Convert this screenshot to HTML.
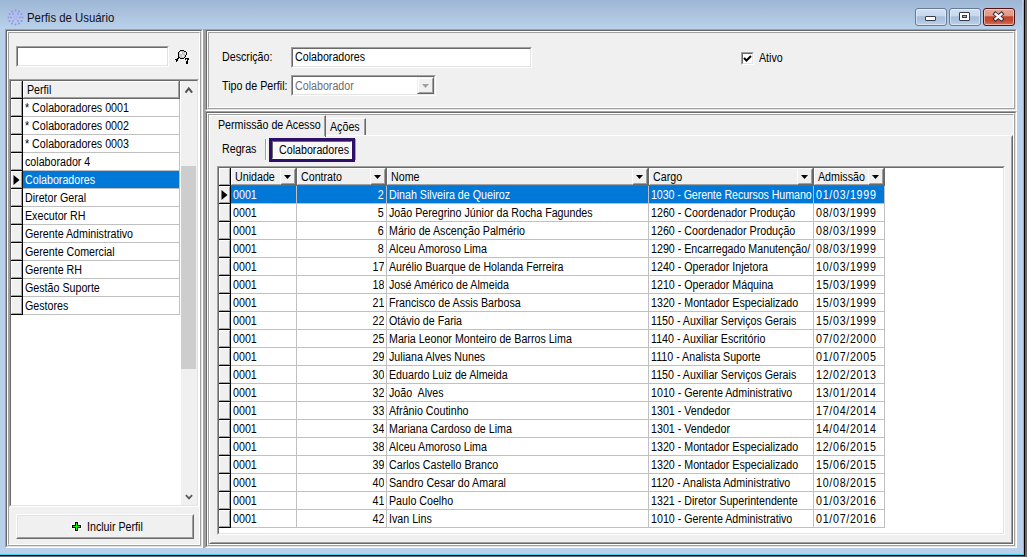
<!DOCTYPE html><html><head><meta charset="utf-8"><style>
html,body{margin:0;padding:0}
body{width:1027px;height:557px;overflow:hidden;position:relative;background:#b9d1ea;font-family:"Liberation Sans",sans-serif;font-size:12px;color:#000}
.a{position:absolute;box-sizing:border-box}
.t{position:absolute;white-space:nowrap;line-height:12px}
</style></head><body>
<div class="a" style="left:0px;top:0px;width:1027px;height:29px;background:linear-gradient(#9db6d5,#b9d1ea)"></div>
<div class="a" style="left:1023px;top:2px;width:1px;height:553px;background:#3cd6f2"></div>
<div class="a" style="left:1024px;top:0px;width:1px;height:557px;background:#000"></div>
<div class="a" style="left:1025px;top:0px;width:2px;height:557px;background:#6b6b6b"></div>
<div class="a" style="left:0px;top:552px;width:1023px;height:2px;background:#c0cde8"></div>
<div class="a" style="left:0px;top:554px;width:1024px;height:1px;background:#3cd6f2"></div>
<div class="a" style="left:0px;top:555px;width:1025px;height:1px;background:#000"></div>
<div class="a" style="left:0px;top:556px;width:1025px;height:1px;background:#6b6b6b"></div>
<div class="a" style="left:1022px;top:0px;width:1px;height:554px;background:#c0cde8"></div>
<svg class="a" style="left:7px;top:9px" width="17" height="17" viewBox="0 0 17 17"><g fill="#9d8ff5"><circle cx="8.5" cy="1.5" r="1"/><circle cx="12" cy="2.5" r="1"/><circle cx="5" cy="2.5" r="1"/><circle cx="14.5" cy="5" r="1"/><circle cx="2.5" cy="5" r="1"/><circle cx="15.5" cy="8.5" r="1"/><circle cx="1.5" cy="8.5" r="1"/><circle cx="14.5" cy="12" r="1"/><circle cx="2.5" cy="12" r="1"/><circle cx="12" cy="14.5" r="1"/><circle cx="5" cy="14.5" r="1"/><circle cx="8.5" cy="15.5" r="1"/><circle cx="6" cy="5" r="0.9"/><circle cx="11" cy="5" r="0.9"/><circle cx="4" cy="8.5" r="0.9"/><circle cx="13" cy="8.5" r="0.9"/><circle cx="6" cy="12" r="0.9"/><circle cx="11" cy="12" r="0.9"/></g><circle cx="8.5" cy="8.5" r="1.6" fill="none" stroke="#a99cf2" stroke-width="0.9" opacity="0.7"/></svg>
<div class="t" style="left:27px;top:11px;font-size:13px;line-height:14px;color:#101018;transform-origin:0 0;transform:scaleX(0.875)">Perfis de Usuário</div>
<div class="a" style="left:915px;top:8px;width:32px;height:18px;border:1px solid #687a96;border-radius:3px;background:linear-gradient(#d2e1f2 0%,#c6d8ee 44%,#a6bedb 48%,#aec5e0 75%,#bdd2ea 100%);box-shadow:inset 0 0 0 1px rgba(255,255,255,0.45)"></div>
<div class="a" style="left:949px;top:8px;width:32px;height:18px;border:1px solid #687a96;border-radius:3px;background:linear-gradient(#d2e1f2 0%,#c6d8ee 44%,#a6bedb 48%,#aec5e0 75%,#bdd2ea 100%);box-shadow:inset 0 0 0 1px rgba(255,255,255,0.45)"></div>
<div class="a" style="left:983px;top:8px;width:32px;height:18px;border:1px solid #4e1418;border-radius:3px;background:linear-gradient(#eaa795 0%,#df9784 44%,#c2442b 48%,#c54c33 75%,#d57560 100%);box-shadow:inset 0 0 0 1px rgba(255,220,210,0.6)"></div>
<div class="a" style="left:925px;top:16px;width:11px;height:5px;background:#fff;border:1px solid #3a3a4e;border-radius:1px"></div>
<div class="a" style="left:959px;top:12px;width:11px;height:9px;background:#fff;border:1px solid #3a3a4e;border-radius:1px"></div>
<div class="a" style="left:962px;top:15px;width:5px;height:3px;background:#9fb5d2;border:1px solid #3a3a4e"></div>
<svg class="a" style="left:991px;top:10px" width="15" height="13" viewBox="0 0 15 13"><path d="M4.5 4 L10.5 9 M10.5 4 L4.5 9" stroke="#2c2c3c" stroke-width="4.2" stroke-linecap="square"/><path d="M4.5 4 L10.5 9 M10.5 4 L4.5 9" stroke="#f4f4f4" stroke-width="2.3" stroke-linecap="square"/></svg>
<div class="a" style="left:5px;top:29px;width:1012px;height:519px;background:#f0f0f0"></div>
<div class="a" style="left:5px;top:29px;width:198px;height:519px;border:1px solid;border-color:#a0a0a0 #ffffff #ffffff #a0a0a0;"></div><div class="a" style="left:6px;top:30px;width:196px;height:517px;border:1px solid;border-color:#696969 #e3e3e3 #e3e3e3 #696969;"></div><div class="a" style="left:7px;top:31px;width:194px;height:515px;border:1px solid;border-color:#ffffff #a0a0a0 #a0a0a0 #ffffff;"></div><div class="a" style="left:8px;top:32px;width:192px;height:513px;border:1px solid;border-color:#a0a0a0 #ffffff #ffffff #a0a0a0;background:#f0f0f0;"></div>
<div class="a" style="left:16px;top:46px;width:153px;height:21px;border:1px solid;border-color:#a0a0a0 #ffffff #ffffff #a0a0a0;"></div><div class="a" style="left:17px;top:47px;width:151px;height:19px;border:1px solid;border-color:#696969 #e3e3e3 #e3e3e3 #696969;background:#ffffff;"></div>
<svg class="a" style="left:170px;top:45px" width="24" height="24" viewBox="0 0 24 24" shape-rendering="crispEdges"><rect x="9" y="6" width="6" height="7" fill="#c4c4c4"/><rect x="10" y="7" width="2" height="2" fill="#f0f0f0"/><rect x="12" y="10" width="2" height="2" fill="#e2e2e2"/><g fill="#000"><rect x="10" y="5" width="4" height="1"/><rect x="9" y="6" width="1" height="1"/><rect x="14" y="6" width="2" height="1"/><rect x="8" y="7" width="1" height="5"/><rect x="16" y="7" width="1" height="3"/><rect x="15" y="10" width="1" height="2"/><rect x="14" y="12" width="1" height="1"/><rect x="9" y="12" width="1" height="1"/><rect x="10" y="13" width="4" height="1"/><rect x="8" y="12" width="1" height="2"/><rect x="7" y="13" width="1" height="2"/><rect x="6" y="14" width="1" height="3"/><rect x="5" y="14" width="1" height="1"/><rect x="7" y="15" width="1" height="1"/><rect x="6" y="16" width="1" height="1"/><rect x="15" y="13" width="4" height="1"/><rect x="18" y="14" width="1" height="1"/><rect x="17" y="14" width="1" height="4"/><rect x="16" y="16" width="1" height="3"/><rect x="17" y="18" width="1" height="1"/><rect x="15" y="14" width="1" height="1"/></g></svg>
<div class="a" style="left:9px;top:79px;width:190px;height:428px;border:1px solid;border-color:#a0a0a0 #ffffff #ffffff #a0a0a0;"></div><div class="a" style="left:10px;top:80px;width:188px;height:426px;border:1px solid;border-color:#696969 #e3e3e3 #e3e3e3 #696969;background:#ffffff;"></div><div class="a" style="left:11px;top:81px;width:11px;height:17px;border:1px solid;border-color:#fff #a0a0a0 #a0a0a0 #fff;background:#f0f0f0;"></div><div class="a" style="left:22px;top:81px;width:1px;height:234px;background:#000"></div><div class="a" style="left:23px;top:81px;width:156px;height:17px;border:1px solid;border-color:#fff #a0a0a0 #a0a0a0 #fff;background:#f0f0f0;"></div><div class="a" style="left:179px;top:81px;width:1px;height:18px;background:#696969"></div><div class="t" style="left:27px;top:84px;transform-origin:0 0;transform:scaleX(0.89);color:#000;font-size:12px;">Perfil</div><div class="a" style="left:22px;top:98px;width:158px;height:1px;background:#696969"></div><div class="a" style="left:11px;top:98px;width:12px;height:1px;background:#000"></div><div class="a" style="left:11px;top:99px;width:11px;height:17px;border:1px solid;border-color:#fff #a0a0a0 #a0a0a0 #fff;background:#f0f0f0;"></div><div class="a" style="left:11px;top:116px;width:11px;height:1px;background:#000"></div><div class="a" style="left:25px;top:102px;width:154px;height:14px;overflow:hidden"><div class="t" style="left:0;top:0;transform-origin:0 0;transform:scaleX(0.89);color:#000;font-size:12px;">* Colaboradores 0001</div></div><div class="a" style="left:179px;top:99px;width:1px;height:18px;background:#c0c0c0"></div><div class="a" style="left:23px;top:116px;width:157px;height:1px;background:#c0c0c0"></div><div class="a" style="left:11px;top:117px;width:11px;height:17px;border:1px solid;border-color:#fff #a0a0a0 #a0a0a0 #fff;background:#f0f0f0;"></div><div class="a" style="left:11px;top:134px;width:11px;height:1px;background:#000"></div><div class="a" style="left:25px;top:120px;width:154px;height:14px;overflow:hidden"><div class="t" style="left:0;top:0;transform-origin:0 0;transform:scaleX(0.89);color:#000;font-size:12px;">* Colaboradores 0002</div></div><div class="a" style="left:179px;top:117px;width:1px;height:18px;background:#c0c0c0"></div><div class="a" style="left:23px;top:134px;width:157px;height:1px;background:#c0c0c0"></div><div class="a" style="left:11px;top:135px;width:11px;height:17px;border:1px solid;border-color:#fff #a0a0a0 #a0a0a0 #fff;background:#f0f0f0;"></div><div class="a" style="left:11px;top:152px;width:11px;height:1px;background:#000"></div><div class="a" style="left:25px;top:138px;width:154px;height:14px;overflow:hidden"><div class="t" style="left:0;top:0;transform-origin:0 0;transform:scaleX(0.89);color:#000;font-size:12px;">* Colaboradores 0003</div></div><div class="a" style="left:179px;top:135px;width:1px;height:18px;background:#c0c0c0"></div><div class="a" style="left:23px;top:152px;width:157px;height:1px;background:#c0c0c0"></div><div class="a" style="left:11px;top:153px;width:11px;height:17px;border:1px solid;border-color:#fff #a0a0a0 #a0a0a0 #fff;background:#f0f0f0;"></div><div class="a" style="left:11px;top:170px;width:11px;height:1px;background:#000"></div><div class="a" style="left:25px;top:156px;width:154px;height:14px;overflow:hidden"><div class="t" style="left:0;top:0;transform-origin:0 0;transform:scaleX(0.89);color:#000;font-size:12px;">colaborador 4</div></div><div class="a" style="left:179px;top:153px;width:1px;height:18px;background:#c0c0c0"></div><div class="a" style="left:23px;top:170px;width:157px;height:1px;background:#c0c0c0"></div><div class="a" style="left:11px;top:171px;width:11px;height:17px;border:1px solid;border-color:#fff #a0a0a0 #a0a0a0 #fff;background:#f0f0f0;"></div><div class="a" style="left:11px;top:188px;width:11px;height:1px;background:#000"></div><svg class="a" style="left:13px;top:175px" width="7" height="10"><path d="M0.5 0 L6.5 5 L0.5 10 Z" fill="#000"/></svg><div class="a" style="left:23px;top:171px;width:156px;height:17px;background:#0078d7"></div><div class="a" style="left:25px;top:174px;width:154px;height:14px;overflow:hidden"><div class="t" style="left:0;top:0;transform-origin:0 0;transform:scaleX(0.89);color:#fff;font-size:12px;">Colaboradores</div></div><div class="a" style="left:179px;top:171px;width:1px;height:18px;background:#c0c0c0"></div><div class="a" style="left:23px;top:188px;width:157px;height:1px;background:#c0c0c0"></div><div class="a" style="left:11px;top:189px;width:11px;height:17px;border:1px solid;border-color:#fff #a0a0a0 #a0a0a0 #fff;background:#f0f0f0;"></div><div class="a" style="left:11px;top:206px;width:11px;height:1px;background:#000"></div><div class="a" style="left:25px;top:192px;width:154px;height:14px;overflow:hidden"><div class="t" style="left:0;top:0;transform-origin:0 0;transform:scaleX(0.89);color:#000;font-size:12px;">Diretor Geral</div></div><div class="a" style="left:179px;top:189px;width:1px;height:18px;background:#c0c0c0"></div><div class="a" style="left:23px;top:206px;width:157px;height:1px;background:#c0c0c0"></div><div class="a" style="left:11px;top:207px;width:11px;height:17px;border:1px solid;border-color:#fff #a0a0a0 #a0a0a0 #fff;background:#f0f0f0;"></div><div class="a" style="left:11px;top:224px;width:11px;height:1px;background:#000"></div><div class="a" style="left:25px;top:210px;width:154px;height:14px;overflow:hidden"><div class="t" style="left:0;top:0;transform-origin:0 0;transform:scaleX(0.89);color:#000;font-size:12px;">Executor RH</div></div><div class="a" style="left:179px;top:207px;width:1px;height:18px;background:#c0c0c0"></div><div class="a" style="left:23px;top:224px;width:157px;height:1px;background:#c0c0c0"></div><div class="a" style="left:11px;top:225px;width:11px;height:17px;border:1px solid;border-color:#fff #a0a0a0 #a0a0a0 #fff;background:#f0f0f0;"></div><div class="a" style="left:11px;top:242px;width:11px;height:1px;background:#000"></div><div class="a" style="left:25px;top:228px;width:154px;height:14px;overflow:hidden"><div class="t" style="left:0;top:0;transform-origin:0 0;transform:scaleX(0.89);color:#000;font-size:12px;">Gerente Administrativo</div></div><div class="a" style="left:179px;top:225px;width:1px;height:18px;background:#c0c0c0"></div><div class="a" style="left:23px;top:242px;width:157px;height:1px;background:#c0c0c0"></div><div class="a" style="left:11px;top:243px;width:11px;height:17px;border:1px solid;border-color:#fff #a0a0a0 #a0a0a0 #fff;background:#f0f0f0;"></div><div class="a" style="left:11px;top:260px;width:11px;height:1px;background:#000"></div><div class="a" style="left:25px;top:246px;width:154px;height:14px;overflow:hidden"><div class="t" style="left:0;top:0;transform-origin:0 0;transform:scaleX(0.89);color:#000;font-size:12px;">Gerente Comercial</div></div><div class="a" style="left:179px;top:243px;width:1px;height:18px;background:#c0c0c0"></div><div class="a" style="left:23px;top:260px;width:157px;height:1px;background:#c0c0c0"></div><div class="a" style="left:11px;top:261px;width:11px;height:17px;border:1px solid;border-color:#fff #a0a0a0 #a0a0a0 #fff;background:#f0f0f0;"></div><div class="a" style="left:11px;top:278px;width:11px;height:1px;background:#000"></div><div class="a" style="left:25px;top:264px;width:154px;height:14px;overflow:hidden"><div class="t" style="left:0;top:0;transform-origin:0 0;transform:scaleX(0.89);color:#000;font-size:12px;">Gerente RH</div></div><div class="a" style="left:179px;top:261px;width:1px;height:18px;background:#c0c0c0"></div><div class="a" style="left:23px;top:278px;width:157px;height:1px;background:#c0c0c0"></div><div class="a" style="left:11px;top:279px;width:11px;height:17px;border:1px solid;border-color:#fff #a0a0a0 #a0a0a0 #fff;background:#f0f0f0;"></div><div class="a" style="left:11px;top:296px;width:11px;height:1px;background:#000"></div><div class="a" style="left:25px;top:282px;width:154px;height:14px;overflow:hidden"><div class="t" style="left:0;top:0;transform-origin:0 0;transform:scaleX(0.89);color:#000;font-size:12px;">Gestão Suporte</div></div><div class="a" style="left:179px;top:279px;width:1px;height:18px;background:#c0c0c0"></div><div class="a" style="left:23px;top:296px;width:157px;height:1px;background:#c0c0c0"></div><div class="a" style="left:11px;top:297px;width:11px;height:17px;border:1px solid;border-color:#fff #a0a0a0 #a0a0a0 #fff;background:#f0f0f0;"></div><div class="a" style="left:11px;top:314px;width:11px;height:1px;background:#000"></div><div class="a" style="left:25px;top:300px;width:154px;height:14px;overflow:hidden"><div class="t" style="left:0;top:0;transform-origin:0 0;transform:scaleX(0.89);color:#000;font-size:12px;">Gestores</div></div><div class="a" style="left:179px;top:297px;width:1px;height:18px;background:#c0c0c0"></div><div class="a" style="left:23px;top:314px;width:157px;height:1px;background:#c0c0c0"></div>
<div class="a" style="left:181px;top:81px;width:16px;height:424px;background:#f0f0f0"></div>
<div class="a" style="left:181px;top:166px;width:15px;height:203px;background:#cdcdcd"></div>
<svg class="a" style="left:184px;top:86px" width="10" height="8"><path d="M1.5 6.6 L4.8 2.4 L8.1 6.6" stroke="#555" stroke-width="2.1" fill="none"/></svg>
<svg class="a" style="left:185px;top:494px" width="8" height="6"><path d="M0.9 1.1 L4 4.4 L7.1 1.1" stroke="#5a5a5a" stroke-width="1.8" fill="none"/></svg>
<div class="a" style="left:16px;top:514px;width:178px;height:25px;border:1px solid;border-color:#fff #696969 #696969 #fff;background:#f0f0f0;"></div>
<div class="a" style="left:17px;top:515px;width:176px;height:23px;border:1px solid;border-color:#e3e3e3 #a0a0a0 #a0a0a0 #e3e3e3;"></div>
<div class="a" style="left:74px;top:521px;width:5px;height:11px;background:#fff"></div>
<div class="a" style="left:71px;top:524px;width:11px;height:5px;background:#fff"></div>
<div class="a" style="left:75px;top:522px;width:3px;height:9px;background:#000"></div>
<div class="a" style="left:72px;top:525px;width:9px;height:3px;background:#000"></div>
<div class="a" style="left:76px;top:523px;width:1px;height:7px;background:#00ff00"></div>
<div class="a" style="left:73px;top:526px;width:7px;height:1px;background:#00ff00"></div>
<div class="t" style="left:87px;top:521px;transform-origin:0 0;transform:scaleX(0.89);color:#000;font-size:12px;">Incluir Perfil</div>
<div class="a" style="left:203px;top:29px;width:2px;height:519px;background:#a0a0a0"></div>
<div class="a" style="left:205px;top:29px;width:812px;height:82px;border:1px solid;border-color:#a0a0a0 #ffffff #ffffff #a0a0a0;"></div><div class="a" style="left:206px;top:30px;width:810px;height:80px;border:1px solid;border-color:#696969 #e3e3e3 #e3e3e3 #696969;"></div><div class="a" style="left:207px;top:31px;width:808px;height:78px;border:1px solid;border-color:#ffffff #a0a0a0 #a0a0a0 #ffffff;"></div><div class="a" style="left:208px;top:32px;width:806px;height:76px;border:1px solid;border-color:#a0a0a0 #ffffff #ffffff #a0a0a0;background:#f0f0f0;"></div>
<div class="t" style="left:222px;top:51px;transform-origin:0 0;transform:scaleX(0.89);color:#000;font-size:12px;">Descrição:</div>
<div class="a" style="left:291px;top:47px;width:241px;height:21px;border:1px solid;border-color:#a0a0a0 #ffffff #ffffff #a0a0a0;"></div><div class="a" style="left:292px;top:48px;width:239px;height:19px;border:1px solid;border-color:#696969 #e3e3e3 #e3e3e3 #696969;background:#ffffff;"></div>
<div class="t" style="left:295px;top:51px;transform-origin:0 0;transform:scaleX(0.89);color:#000;font-size:12px;">Colaboradores</div>
<div class="t" style="left:222px;top:80px;transform-origin:0 0;transform:scaleX(0.89);color:#000;font-size:12px;">Tipo de Perfil:</div>
<div class="a" style="left:291px;top:75px;width:145px;height:21px;border:1px solid;border-color:#a0a0a0 #ffffff #ffffff #a0a0a0;"></div><div class="a" style="left:292px;top:76px;width:143px;height:19px;border:1px solid;border-color:#696969 #e3e3e3 #e3e3e3 #696969;background:#f0f0f0;"></div>
<div class="a" style="left:293px;top:77px;width:124px;height:17px;background:#ffffff"></div>
<div class="t" style="left:295px;top:80px;transform-origin:0 0;transform:scaleX(0.89);color:#6d6d6d;font-size:12px;">Colaborador</div>
<div class="a" style="left:417px;top:77px;width:17px;height:17px;border:1px solid;border-color:#f0f0f0 #696969 #696969 #f0f0f0;background:#f0f0f0;"></div>
<div class="a" style="left:418px;top:78px;width:15px;height:15px;border:1px solid;border-color:#fff #a0a0a0 #a0a0a0 #fff;"></div>
<svg class="a" style="left:422px;top:84px" width="7" height="4"><path d="M0 0 H7 L3.5 4 Z" fill="#a0a0a0"/></svg>
<div class="a" style="left:741px;top:52px;width:13px;height:13px;border:1px solid;border-color:#a0a0a0 #ffffff #ffffff #a0a0a0;"></div><div class="a" style="left:742px;top:53px;width:11px;height:11px;border:1px solid;border-color:#696969 #e3e3e3 #e3e3e3 #696969;background:#ffffff;"></div>
<svg class="a" style="left:743px;top:54px" width="9" height="9"><path d="M1 4 L3.5 6.5 L8 2" stroke="#000" stroke-width="2" fill="none"/></svg>
<div class="t" style="left:759px;top:52px;transform-origin:0 0;transform:scaleX(0.89);color:#000;font-size:12px;">Ativo</div>
<div class="a" style="left:205px;top:111px;width:812px;height:437px;border:1px solid;border-color:#a0a0a0 #ffffff #ffffff #a0a0a0;"></div><div class="a" style="left:206px;top:112px;width:810px;height:435px;border:1px solid;border-color:#696969 #e3e3e3 #e3e3e3 #696969;"></div><div class="a" style="left:207px;top:113px;width:808px;height:433px;border:1px solid;border-color:#ffffff #a0a0a0 #a0a0a0 #ffffff;"></div><div class="a" style="left:208px;top:114px;width:806px;height:431px;border:1px solid;border-color:#a0a0a0 #ffffff #ffffff #a0a0a0;background:#f0f0f0;"></div>
<div class="a" style="left:209px;top:135px;width:804px;height:409px;border:1px solid;border-color:#fff #696969 #696969 #fff;"></div>
<div class="a" style="left:210px;top:136px;width:802px;height:407px;border:1px solid;border-color:#f0f0f0 #a0a0a0 #a0a0a0 #f0f0f0;"></div>
<div class="a" style="left:209px;top:115px;width:117px;height:22px;background:#f0f0f0;border-style:solid;border-width:1px 1px 0 1px;border-color:#fff #696969 #f0f0f0 #fff"></div>
<div class="a" style="left:324px;top:116px;width:1px;height:20px;background:#a0a0a0"></div>
<div class="t" style="left:218px;top:119px;transform-origin:0 0;transform:scaleX(0.89);color:#000;font-size:12px;">Permissão de Acesso</div>
<div class="a" style="left:326px;top:118px;width:40px;height:17px;background:#f0f0f0;border-style:solid;border-width:1px 1px 0 0;border-color:#fff #696969 #f0f0f0 #fff"></div>
<div class="a" style="left:364px;top:119px;width:1px;height:16px;background:#a0a0a0"></div>
<div class="t" style="left:330px;top:121px;transform-origin:0 0;transform:scaleX(0.89);color:#000;font-size:12px;">Ações</div>
<div class="t" style="left:222px;top:143px;transform-origin:0 0;transform:scaleX(0.89);color:#000;font-size:12px;">Regras</div>
<div class="a" style="left:265px;top:139px;width:1px;height:21px;background:#a0a0a0"></div>
<div class="a" style="left:266px;top:139px;width:1px;height:21px;background:#ffffff"></div>
<div class="a" style="left:269px;top:138px;width:86px;height:24px;border:3px solid #2d0f68;background:#f7f7f7"></div>
<div class="a" style="left:272px;top:141px;width:80px;height:18px;border:1px solid;border-color:#696969 #fff #fff #696969;"></div>
<div class="t" style="left:279px;top:144px;transform-origin:0 0;transform:scaleX(0.89);color:#000;font-size:12px;">Colaboradores</div>
<div class="a" style="left:355px;top:139px;width:1px;height:21px;background:#a0a0a0"></div>
<div class="a" style="left:217px;top:166px;width:788px;height:369px;border:1px solid;border-color:#a0a0a0 #ffffff #ffffff #a0a0a0;"></div><div class="a" style="left:218px;top:167px;width:786px;height:367px;border:1px solid;border-color:#696969 #e3e3e3 #e3e3e3 #696969;background:#ffffff;"></div><div class="a" style="left:219px;top:168px;width:11px;height:17px;border:1px solid;border-color:#fff #a0a0a0 #a0a0a0 #fff;background:#f0f0f0;"></div><div class="a" style="left:230px;top:168px;width:1px;height:360px;background:#000"></div><div class="a" style="left:231px;top:168px;width:65px;height:17px;border:1px solid;border-color:#fff #a0a0a0 #a0a0a0 #fff;background:#f0f0f0;"></div><div class="a" style="left:296px;top:168px;width:1px;height:18px;background:#696969"></div><div class="t" style="left:235px;top:171px;transform-origin:0 0;transform:scaleX(0.89);color:#000;font-size:12px;">Unidade</div><div class="a" style="left:280px;top:168px;width:16px;height:17px;border:1px solid;border-color:#fff #696969 #696969 #fff;background:#f0f0f0;"></div><div class="a" style="left:281px;top:169px;width:14px;height:15px;border:1px solid;border-color:#f0f0f0 #a0a0a0 #a0a0a0 #f0f0f0;"></div><svg class="a" style="left:284px;top:175px" width="7" height="4"><path d="M0 0 H7 L3.5 4 Z" fill="#000"/></svg><div class="a" style="left:297px;top:168px;width:89px;height:17px;border:1px solid;border-color:#fff #a0a0a0 #a0a0a0 #fff;background:#f0f0f0;"></div><div class="a" style="left:386px;top:168px;width:1px;height:18px;background:#696969"></div><div class="t" style="left:301px;top:171px;transform-origin:0 0;transform:scaleX(0.89);color:#000;font-size:12px;">Contrato</div><div class="a" style="left:370px;top:168px;width:16px;height:17px;border:1px solid;border-color:#fff #696969 #696969 #fff;background:#f0f0f0;"></div><div class="a" style="left:371px;top:169px;width:14px;height:15px;border:1px solid;border-color:#f0f0f0 #a0a0a0 #a0a0a0 #f0f0f0;"></div><svg class="a" style="left:374px;top:175px" width="7" height="4"><path d="M0 0 H7 L3.5 4 Z" fill="#000"/></svg><div class="a" style="left:387px;top:168px;width:261px;height:17px;border:1px solid;border-color:#fff #a0a0a0 #a0a0a0 #fff;background:#f0f0f0;"></div><div class="a" style="left:648px;top:168px;width:1px;height:18px;background:#696969"></div><div class="t" style="left:391px;top:171px;transform-origin:0 0;transform:scaleX(0.89);color:#000;font-size:12px;">Nome</div><div class="a" style="left:632px;top:168px;width:16px;height:17px;border:1px solid;border-color:#fff #696969 #696969 #fff;background:#f0f0f0;"></div><div class="a" style="left:633px;top:169px;width:14px;height:15px;border:1px solid;border-color:#f0f0f0 #a0a0a0 #a0a0a0 #f0f0f0;"></div><svg class="a" style="left:636px;top:175px" width="7" height="4"><path d="M0 0 H7 L3.5 4 Z" fill="#000"/></svg><div class="a" style="left:649px;top:168px;width:164px;height:17px;border:1px solid;border-color:#fff #a0a0a0 #a0a0a0 #fff;background:#f0f0f0;"></div><div class="a" style="left:813px;top:168px;width:1px;height:18px;background:#696969"></div><div class="t" style="left:653px;top:171px;transform-origin:0 0;transform:scaleX(0.89);color:#000;font-size:12px;">Cargo</div><div class="a" style="left:797px;top:168px;width:16px;height:17px;border:1px solid;border-color:#fff #696969 #696969 #fff;background:#f0f0f0;"></div><div class="a" style="left:798px;top:169px;width:14px;height:15px;border:1px solid;border-color:#f0f0f0 #a0a0a0 #a0a0a0 #f0f0f0;"></div><svg class="a" style="left:801px;top:175px" width="7" height="4"><path d="M0 0 H7 L3.5 4 Z" fill="#000"/></svg><div class="a" style="left:814px;top:168px;width:70px;height:17px;border:1px solid;border-color:#fff #a0a0a0 #a0a0a0 #fff;background:#f0f0f0;"></div><div class="a" style="left:884px;top:168px;width:1px;height:18px;background:#696969"></div><div class="t" style="left:818px;top:171px;transform-origin:0 0;transform:scaleX(0.89);color:#000;font-size:12px;">Admissão</div><div class="a" style="left:868px;top:168px;width:16px;height:17px;border:1px solid;border-color:#fff #696969 #696969 #fff;background:#f0f0f0;"></div><div class="a" style="left:869px;top:169px;width:14px;height:15px;border:1px solid;border-color:#f0f0f0 #a0a0a0 #a0a0a0 #f0f0f0;"></div><svg class="a" style="left:872px;top:175px" width="7" height="4"><path d="M0 0 H7 L3.5 4 Z" fill="#000"/></svg><div class="a" style="left:230px;top:185px;width:655px;height:1px;background:#696969"></div><div class="a" style="left:219px;top:185px;width:12px;height:1px;background:#000"></div><div class="a" style="left:219px;top:186px;width:11px;height:17px;border:1px solid;border-color:#fff #a0a0a0 #a0a0a0 #fff;background:#f0f0f0;"></div><div class="a" style="left:219px;top:203px;width:11px;height:1px;background:#000"></div><svg class="a" style="left:221px;top:190px" width="7" height="10"><path d="M0.5 0 L6.5 5 L0.5 10 Z" fill="#000"/></svg><div class="a" style="left:231px;top:186px;width:65px;height:17px;background:#0078d7"></div><div class="a" style="left:233px;top:189px;width:63px;height:14px;overflow:hidden"><div class="t" style="left:0;top:0;transform-origin:0 0;transform:scaleX(0.89);color:#fff;font-size:12px;">0001</div></div><div class="a" style="left:296px;top:186px;width:1px;height:18px;background:#c0c0c0"></div><div class="a" style="left:231px;top:203px;width:66px;height:1px;background:#c0c0c0"></div><div class="a" style="left:297px;top:186px;width:89px;height:17px;background:#0078d7"></div><div class="a" style="left:297px;top:189px;width:87px;height:14px;overflow:hidden"><div class="t" style="right:0;top:0;transform-origin:100% 0;transform:scaleX(0.89);color:#fff;font-size:12px;">2</div></div><div class="a" style="left:386px;top:186px;width:1px;height:18px;background:#c0c0c0"></div><div class="a" style="left:297px;top:203px;width:90px;height:1px;background:#c0c0c0"></div><div class="a" style="left:387px;top:186px;width:261px;height:17px;background:#0078d7"></div><div class="a" style="left:389px;top:189px;width:259px;height:14px;overflow:hidden"><div class="t" style="left:0;top:0;transform-origin:0 0;transform:scaleX(0.89);color:#fff;font-size:12px;">Dinah Silveira de Queiroz</div></div><div class="a" style="left:648px;top:186px;width:1px;height:18px;background:#c0c0c0"></div><div class="a" style="left:387px;top:203px;width:262px;height:1px;background:#c0c0c0"></div><div class="a" style="left:649px;top:186px;width:164px;height:17px;background:#0078d7"></div><div class="a" style="left:651px;top:189px;width:162px;height:14px;overflow:hidden"><div class="t" style="left:0;top:0;transform-origin:0 0;transform:scaleX(0.89);color:#fff;font-size:12px;letter-spacing:-0.1px;">1030 - Gerente Recursos Humano</div></div><div class="a" style="left:813px;top:186px;width:1px;height:18px;background:#c0c0c0"></div><div class="a" style="left:649px;top:203px;width:165px;height:1px;background:#c0c0c0"></div><div class="a" style="left:814px;top:186px;width:70px;height:17px;background:#0078d7"></div><div class="a" style="left:816px;top:189px;width:68px;height:14px;overflow:hidden"><div class="t" style="left:0;top:0;transform-origin:0 0;transform:scaleX(0.89);color:#fff;font-size:12px;letter-spacing:0.8px;">01/03/1999</div></div><div class="a" style="left:884px;top:186px;width:1px;height:18px;background:#c0c0c0"></div><div class="a" style="left:814px;top:203px;width:71px;height:1px;background:#c0c0c0"></div><div class="a" style="left:219px;top:204px;width:11px;height:17px;border:1px solid;border-color:#fff #a0a0a0 #a0a0a0 #fff;background:#f0f0f0;"></div><div class="a" style="left:219px;top:221px;width:11px;height:1px;background:#000"></div><div class="a" style="left:233px;top:207px;width:63px;height:14px;overflow:hidden"><div class="t" style="left:0;top:0;transform-origin:0 0;transform:scaleX(0.89);color:#000;font-size:12px;">0001</div></div><div class="a" style="left:296px;top:204px;width:1px;height:18px;background:#c0c0c0"></div><div class="a" style="left:231px;top:221px;width:66px;height:1px;background:#c0c0c0"></div><div class="a" style="left:297px;top:207px;width:87px;height:14px;overflow:hidden"><div class="t" style="right:0;top:0;transform-origin:100% 0;transform:scaleX(0.89);color:#000;font-size:12px;">5</div></div><div class="a" style="left:386px;top:204px;width:1px;height:18px;background:#c0c0c0"></div><div class="a" style="left:297px;top:221px;width:90px;height:1px;background:#c0c0c0"></div><div class="a" style="left:389px;top:207px;width:259px;height:14px;overflow:hidden"><div class="t" style="left:0;top:0;transform-origin:0 0;transform:scaleX(0.89);color:#000;font-size:12px;">João Peregrino Júnior da Rocha Fagundes</div></div><div class="a" style="left:648px;top:204px;width:1px;height:18px;background:#c0c0c0"></div><div class="a" style="left:387px;top:221px;width:262px;height:1px;background:#c0c0c0"></div><div class="a" style="left:651px;top:207px;width:162px;height:14px;overflow:hidden"><div class="t" style="left:0;top:0;transform-origin:0 0;transform:scaleX(0.89);color:#000;font-size:12px;">1260 - Coordenador Produção</div></div><div class="a" style="left:813px;top:204px;width:1px;height:18px;background:#c0c0c0"></div><div class="a" style="left:649px;top:221px;width:165px;height:1px;background:#c0c0c0"></div><div class="a" style="left:816px;top:207px;width:68px;height:14px;overflow:hidden"><div class="t" style="left:0;top:0;transform-origin:0 0;transform:scaleX(0.89);color:#000;font-size:12px;letter-spacing:0.8px;">08/03/1999</div></div><div class="a" style="left:884px;top:204px;width:1px;height:18px;background:#c0c0c0"></div><div class="a" style="left:814px;top:221px;width:71px;height:1px;background:#c0c0c0"></div><div class="a" style="left:219px;top:222px;width:11px;height:17px;border:1px solid;border-color:#fff #a0a0a0 #a0a0a0 #fff;background:#f0f0f0;"></div><div class="a" style="left:219px;top:239px;width:11px;height:1px;background:#000"></div><div class="a" style="left:233px;top:225px;width:63px;height:14px;overflow:hidden"><div class="t" style="left:0;top:0;transform-origin:0 0;transform:scaleX(0.89);color:#000;font-size:12px;">0001</div></div><div class="a" style="left:296px;top:222px;width:1px;height:18px;background:#c0c0c0"></div><div class="a" style="left:231px;top:239px;width:66px;height:1px;background:#c0c0c0"></div><div class="a" style="left:297px;top:225px;width:87px;height:14px;overflow:hidden"><div class="t" style="right:0;top:0;transform-origin:100% 0;transform:scaleX(0.89);color:#000;font-size:12px;">6</div></div><div class="a" style="left:386px;top:222px;width:1px;height:18px;background:#c0c0c0"></div><div class="a" style="left:297px;top:239px;width:90px;height:1px;background:#c0c0c0"></div><div class="a" style="left:389px;top:225px;width:259px;height:14px;overflow:hidden"><div class="t" style="left:0;top:0;transform-origin:0 0;transform:scaleX(0.89);color:#000;font-size:12px;">Mário de Ascenção Palmério</div></div><div class="a" style="left:648px;top:222px;width:1px;height:18px;background:#c0c0c0"></div><div class="a" style="left:387px;top:239px;width:262px;height:1px;background:#c0c0c0"></div><div class="a" style="left:651px;top:225px;width:162px;height:14px;overflow:hidden"><div class="t" style="left:0;top:0;transform-origin:0 0;transform:scaleX(0.89);color:#000;font-size:12px;">1260 - Coordenador Produção</div></div><div class="a" style="left:813px;top:222px;width:1px;height:18px;background:#c0c0c0"></div><div class="a" style="left:649px;top:239px;width:165px;height:1px;background:#c0c0c0"></div><div class="a" style="left:816px;top:225px;width:68px;height:14px;overflow:hidden"><div class="t" style="left:0;top:0;transform-origin:0 0;transform:scaleX(0.89);color:#000;font-size:12px;letter-spacing:0.8px;">08/03/1999</div></div><div class="a" style="left:884px;top:222px;width:1px;height:18px;background:#c0c0c0"></div><div class="a" style="left:814px;top:239px;width:71px;height:1px;background:#c0c0c0"></div><div class="a" style="left:219px;top:240px;width:11px;height:17px;border:1px solid;border-color:#fff #a0a0a0 #a0a0a0 #fff;background:#f0f0f0;"></div><div class="a" style="left:219px;top:257px;width:11px;height:1px;background:#000"></div><div class="a" style="left:233px;top:243px;width:63px;height:14px;overflow:hidden"><div class="t" style="left:0;top:0;transform-origin:0 0;transform:scaleX(0.89);color:#000;font-size:12px;">0001</div></div><div class="a" style="left:296px;top:240px;width:1px;height:18px;background:#c0c0c0"></div><div class="a" style="left:231px;top:257px;width:66px;height:1px;background:#c0c0c0"></div><div class="a" style="left:297px;top:243px;width:87px;height:14px;overflow:hidden"><div class="t" style="right:0;top:0;transform-origin:100% 0;transform:scaleX(0.89);color:#000;font-size:12px;">8</div></div><div class="a" style="left:386px;top:240px;width:1px;height:18px;background:#c0c0c0"></div><div class="a" style="left:297px;top:257px;width:90px;height:1px;background:#c0c0c0"></div><div class="a" style="left:389px;top:243px;width:259px;height:14px;overflow:hidden"><div class="t" style="left:0;top:0;transform-origin:0 0;transform:scaleX(0.89);color:#000;font-size:12px;">Alceu Amoroso Lima</div></div><div class="a" style="left:648px;top:240px;width:1px;height:18px;background:#c0c0c0"></div><div class="a" style="left:387px;top:257px;width:262px;height:1px;background:#c0c0c0"></div><div class="a" style="left:651px;top:243px;width:162px;height:14px;overflow:hidden"><div class="t" style="left:0;top:0;transform-origin:0 0;transform:scaleX(0.89);color:#000;font-size:12px;">1290 - Encarregado Manutenção/</div></div><div class="a" style="left:813px;top:240px;width:1px;height:18px;background:#c0c0c0"></div><div class="a" style="left:649px;top:257px;width:165px;height:1px;background:#c0c0c0"></div><div class="a" style="left:816px;top:243px;width:68px;height:14px;overflow:hidden"><div class="t" style="left:0;top:0;transform-origin:0 0;transform:scaleX(0.89);color:#000;font-size:12px;letter-spacing:0.8px;">08/03/1999</div></div><div class="a" style="left:884px;top:240px;width:1px;height:18px;background:#c0c0c0"></div><div class="a" style="left:814px;top:257px;width:71px;height:1px;background:#c0c0c0"></div><div class="a" style="left:219px;top:258px;width:11px;height:17px;border:1px solid;border-color:#fff #a0a0a0 #a0a0a0 #fff;background:#f0f0f0;"></div><div class="a" style="left:219px;top:275px;width:11px;height:1px;background:#000"></div><div class="a" style="left:233px;top:261px;width:63px;height:14px;overflow:hidden"><div class="t" style="left:0;top:0;transform-origin:0 0;transform:scaleX(0.89);color:#000;font-size:12px;">0001</div></div><div class="a" style="left:296px;top:258px;width:1px;height:18px;background:#c0c0c0"></div><div class="a" style="left:231px;top:275px;width:66px;height:1px;background:#c0c0c0"></div><div class="a" style="left:297px;top:261px;width:87px;height:14px;overflow:hidden"><div class="t" style="right:0;top:0;transform-origin:100% 0;transform:scaleX(0.89);color:#000;font-size:12px;">17</div></div><div class="a" style="left:386px;top:258px;width:1px;height:18px;background:#c0c0c0"></div><div class="a" style="left:297px;top:275px;width:90px;height:1px;background:#c0c0c0"></div><div class="a" style="left:389px;top:261px;width:259px;height:14px;overflow:hidden"><div class="t" style="left:0;top:0;transform-origin:0 0;transform:scaleX(0.89);color:#000;font-size:12px;">Aurélio Buarque de Holanda Ferreira</div></div><div class="a" style="left:648px;top:258px;width:1px;height:18px;background:#c0c0c0"></div><div class="a" style="left:387px;top:275px;width:262px;height:1px;background:#c0c0c0"></div><div class="a" style="left:651px;top:261px;width:162px;height:14px;overflow:hidden"><div class="t" style="left:0;top:0;transform-origin:0 0;transform:scaleX(0.89);color:#000;font-size:12px;">1240 - Operador Injetora</div></div><div class="a" style="left:813px;top:258px;width:1px;height:18px;background:#c0c0c0"></div><div class="a" style="left:649px;top:275px;width:165px;height:1px;background:#c0c0c0"></div><div class="a" style="left:816px;top:261px;width:68px;height:14px;overflow:hidden"><div class="t" style="left:0;top:0;transform-origin:0 0;transform:scaleX(0.89);color:#000;font-size:12px;letter-spacing:0.8px;">10/03/1999</div></div><div class="a" style="left:884px;top:258px;width:1px;height:18px;background:#c0c0c0"></div><div class="a" style="left:814px;top:275px;width:71px;height:1px;background:#c0c0c0"></div><div class="a" style="left:219px;top:276px;width:11px;height:17px;border:1px solid;border-color:#fff #a0a0a0 #a0a0a0 #fff;background:#f0f0f0;"></div><div class="a" style="left:219px;top:293px;width:11px;height:1px;background:#000"></div><div class="a" style="left:233px;top:279px;width:63px;height:14px;overflow:hidden"><div class="t" style="left:0;top:0;transform-origin:0 0;transform:scaleX(0.89);color:#000;font-size:12px;">0001</div></div><div class="a" style="left:296px;top:276px;width:1px;height:18px;background:#c0c0c0"></div><div class="a" style="left:231px;top:293px;width:66px;height:1px;background:#c0c0c0"></div><div class="a" style="left:297px;top:279px;width:87px;height:14px;overflow:hidden"><div class="t" style="right:0;top:0;transform-origin:100% 0;transform:scaleX(0.89);color:#000;font-size:12px;">18</div></div><div class="a" style="left:386px;top:276px;width:1px;height:18px;background:#c0c0c0"></div><div class="a" style="left:297px;top:293px;width:90px;height:1px;background:#c0c0c0"></div><div class="a" style="left:389px;top:279px;width:259px;height:14px;overflow:hidden"><div class="t" style="left:0;top:0;transform-origin:0 0;transform:scaleX(0.89);color:#000;font-size:12px;">José Américo de Almeida</div></div><div class="a" style="left:648px;top:276px;width:1px;height:18px;background:#c0c0c0"></div><div class="a" style="left:387px;top:293px;width:262px;height:1px;background:#c0c0c0"></div><div class="a" style="left:651px;top:279px;width:162px;height:14px;overflow:hidden"><div class="t" style="left:0;top:0;transform-origin:0 0;transform:scaleX(0.89);color:#000;font-size:12px;">1210 - Operador Máquina</div></div><div class="a" style="left:813px;top:276px;width:1px;height:18px;background:#c0c0c0"></div><div class="a" style="left:649px;top:293px;width:165px;height:1px;background:#c0c0c0"></div><div class="a" style="left:816px;top:279px;width:68px;height:14px;overflow:hidden"><div class="t" style="left:0;top:0;transform-origin:0 0;transform:scaleX(0.89);color:#000;font-size:12px;letter-spacing:0.8px;">15/03/1999</div></div><div class="a" style="left:884px;top:276px;width:1px;height:18px;background:#c0c0c0"></div><div class="a" style="left:814px;top:293px;width:71px;height:1px;background:#c0c0c0"></div><div class="a" style="left:219px;top:294px;width:11px;height:17px;border:1px solid;border-color:#fff #a0a0a0 #a0a0a0 #fff;background:#f0f0f0;"></div><div class="a" style="left:219px;top:311px;width:11px;height:1px;background:#000"></div><div class="a" style="left:233px;top:297px;width:63px;height:14px;overflow:hidden"><div class="t" style="left:0;top:0;transform-origin:0 0;transform:scaleX(0.89);color:#000;font-size:12px;">0001</div></div><div class="a" style="left:296px;top:294px;width:1px;height:18px;background:#c0c0c0"></div><div class="a" style="left:231px;top:311px;width:66px;height:1px;background:#c0c0c0"></div><div class="a" style="left:297px;top:297px;width:87px;height:14px;overflow:hidden"><div class="t" style="right:0;top:0;transform-origin:100% 0;transform:scaleX(0.89);color:#000;font-size:12px;">21</div></div><div class="a" style="left:386px;top:294px;width:1px;height:18px;background:#c0c0c0"></div><div class="a" style="left:297px;top:311px;width:90px;height:1px;background:#c0c0c0"></div><div class="a" style="left:389px;top:297px;width:259px;height:14px;overflow:hidden"><div class="t" style="left:0;top:0;transform-origin:0 0;transform:scaleX(0.89);color:#000;font-size:12px;">Francisco de Assis Barbosa</div></div><div class="a" style="left:648px;top:294px;width:1px;height:18px;background:#c0c0c0"></div><div class="a" style="left:387px;top:311px;width:262px;height:1px;background:#c0c0c0"></div><div class="a" style="left:651px;top:297px;width:162px;height:14px;overflow:hidden"><div class="t" style="left:0;top:0;transform-origin:0 0;transform:scaleX(0.89);color:#000;font-size:12px;">1320 - Montador Especializado</div></div><div class="a" style="left:813px;top:294px;width:1px;height:18px;background:#c0c0c0"></div><div class="a" style="left:649px;top:311px;width:165px;height:1px;background:#c0c0c0"></div><div class="a" style="left:816px;top:297px;width:68px;height:14px;overflow:hidden"><div class="t" style="left:0;top:0;transform-origin:0 0;transform:scaleX(0.89);color:#000;font-size:12px;letter-spacing:0.8px;">15/03/1999</div></div><div class="a" style="left:884px;top:294px;width:1px;height:18px;background:#c0c0c0"></div><div class="a" style="left:814px;top:311px;width:71px;height:1px;background:#c0c0c0"></div><div class="a" style="left:219px;top:312px;width:11px;height:17px;border:1px solid;border-color:#fff #a0a0a0 #a0a0a0 #fff;background:#f0f0f0;"></div><div class="a" style="left:219px;top:329px;width:11px;height:1px;background:#000"></div><div class="a" style="left:233px;top:315px;width:63px;height:14px;overflow:hidden"><div class="t" style="left:0;top:0;transform-origin:0 0;transform:scaleX(0.89);color:#000;font-size:12px;">0001</div></div><div class="a" style="left:296px;top:312px;width:1px;height:18px;background:#c0c0c0"></div><div class="a" style="left:231px;top:329px;width:66px;height:1px;background:#c0c0c0"></div><div class="a" style="left:297px;top:315px;width:87px;height:14px;overflow:hidden"><div class="t" style="right:0;top:0;transform-origin:100% 0;transform:scaleX(0.89);color:#000;font-size:12px;">22</div></div><div class="a" style="left:386px;top:312px;width:1px;height:18px;background:#c0c0c0"></div><div class="a" style="left:297px;top:329px;width:90px;height:1px;background:#c0c0c0"></div><div class="a" style="left:389px;top:315px;width:259px;height:14px;overflow:hidden"><div class="t" style="left:0;top:0;transform-origin:0 0;transform:scaleX(0.89);color:#000;font-size:12px;">Otávio de Faria</div></div><div class="a" style="left:648px;top:312px;width:1px;height:18px;background:#c0c0c0"></div><div class="a" style="left:387px;top:329px;width:262px;height:1px;background:#c0c0c0"></div><div class="a" style="left:651px;top:315px;width:162px;height:14px;overflow:hidden"><div class="t" style="left:0;top:0;transform-origin:0 0;transform:scaleX(0.89);color:#000;font-size:12px;">1150 - Auxiliar Serviços Gerais</div></div><div class="a" style="left:813px;top:312px;width:1px;height:18px;background:#c0c0c0"></div><div class="a" style="left:649px;top:329px;width:165px;height:1px;background:#c0c0c0"></div><div class="a" style="left:816px;top:315px;width:68px;height:14px;overflow:hidden"><div class="t" style="left:0;top:0;transform-origin:0 0;transform:scaleX(0.89);color:#000;font-size:12px;letter-spacing:0.8px;">15/03/1999</div></div><div class="a" style="left:884px;top:312px;width:1px;height:18px;background:#c0c0c0"></div><div class="a" style="left:814px;top:329px;width:71px;height:1px;background:#c0c0c0"></div><div class="a" style="left:219px;top:330px;width:11px;height:17px;border:1px solid;border-color:#fff #a0a0a0 #a0a0a0 #fff;background:#f0f0f0;"></div><div class="a" style="left:219px;top:347px;width:11px;height:1px;background:#000"></div><div class="a" style="left:233px;top:333px;width:63px;height:14px;overflow:hidden"><div class="t" style="left:0;top:0;transform-origin:0 0;transform:scaleX(0.89);color:#000;font-size:12px;">0001</div></div><div class="a" style="left:296px;top:330px;width:1px;height:18px;background:#c0c0c0"></div><div class="a" style="left:231px;top:347px;width:66px;height:1px;background:#c0c0c0"></div><div class="a" style="left:297px;top:333px;width:87px;height:14px;overflow:hidden"><div class="t" style="right:0;top:0;transform-origin:100% 0;transform:scaleX(0.89);color:#000;font-size:12px;">25</div></div><div class="a" style="left:386px;top:330px;width:1px;height:18px;background:#c0c0c0"></div><div class="a" style="left:297px;top:347px;width:90px;height:1px;background:#c0c0c0"></div><div class="a" style="left:389px;top:333px;width:259px;height:14px;overflow:hidden"><div class="t" style="left:0;top:0;transform-origin:0 0;transform:scaleX(0.89);color:#000;font-size:12px;">Maria Leonor Monteiro de Barros Lima</div></div><div class="a" style="left:648px;top:330px;width:1px;height:18px;background:#c0c0c0"></div><div class="a" style="left:387px;top:347px;width:262px;height:1px;background:#c0c0c0"></div><div class="a" style="left:651px;top:333px;width:162px;height:14px;overflow:hidden"><div class="t" style="left:0;top:0;transform-origin:0 0;transform:scaleX(0.89);color:#000;font-size:12px;">1140 - Auxiliar Escritório</div></div><div class="a" style="left:813px;top:330px;width:1px;height:18px;background:#c0c0c0"></div><div class="a" style="left:649px;top:347px;width:165px;height:1px;background:#c0c0c0"></div><div class="a" style="left:816px;top:333px;width:68px;height:14px;overflow:hidden"><div class="t" style="left:0;top:0;transform-origin:0 0;transform:scaleX(0.89);color:#000;font-size:12px;letter-spacing:0.8px;">07/02/2000</div></div><div class="a" style="left:884px;top:330px;width:1px;height:18px;background:#c0c0c0"></div><div class="a" style="left:814px;top:347px;width:71px;height:1px;background:#c0c0c0"></div><div class="a" style="left:219px;top:348px;width:11px;height:17px;border:1px solid;border-color:#fff #a0a0a0 #a0a0a0 #fff;background:#f0f0f0;"></div><div class="a" style="left:219px;top:365px;width:11px;height:1px;background:#000"></div><div class="a" style="left:233px;top:351px;width:63px;height:14px;overflow:hidden"><div class="t" style="left:0;top:0;transform-origin:0 0;transform:scaleX(0.89);color:#000;font-size:12px;">0001</div></div><div class="a" style="left:296px;top:348px;width:1px;height:18px;background:#c0c0c0"></div><div class="a" style="left:231px;top:365px;width:66px;height:1px;background:#c0c0c0"></div><div class="a" style="left:297px;top:351px;width:87px;height:14px;overflow:hidden"><div class="t" style="right:0;top:0;transform-origin:100% 0;transform:scaleX(0.89);color:#000;font-size:12px;">29</div></div><div class="a" style="left:386px;top:348px;width:1px;height:18px;background:#c0c0c0"></div><div class="a" style="left:297px;top:365px;width:90px;height:1px;background:#c0c0c0"></div><div class="a" style="left:389px;top:351px;width:259px;height:14px;overflow:hidden"><div class="t" style="left:0;top:0;transform-origin:0 0;transform:scaleX(0.89);color:#000;font-size:12px;">Juliana Alves Nunes</div></div><div class="a" style="left:648px;top:348px;width:1px;height:18px;background:#c0c0c0"></div><div class="a" style="left:387px;top:365px;width:262px;height:1px;background:#c0c0c0"></div><div class="a" style="left:651px;top:351px;width:162px;height:14px;overflow:hidden"><div class="t" style="left:0;top:0;transform-origin:0 0;transform:scaleX(0.89);color:#000;font-size:12px;">1110 - Analista Suporte</div></div><div class="a" style="left:813px;top:348px;width:1px;height:18px;background:#c0c0c0"></div><div class="a" style="left:649px;top:365px;width:165px;height:1px;background:#c0c0c0"></div><div class="a" style="left:816px;top:351px;width:68px;height:14px;overflow:hidden"><div class="t" style="left:0;top:0;transform-origin:0 0;transform:scaleX(0.89);color:#000;font-size:12px;letter-spacing:0.8px;">01/07/2005</div></div><div class="a" style="left:884px;top:348px;width:1px;height:18px;background:#c0c0c0"></div><div class="a" style="left:814px;top:365px;width:71px;height:1px;background:#c0c0c0"></div><div class="a" style="left:219px;top:366px;width:11px;height:17px;border:1px solid;border-color:#fff #a0a0a0 #a0a0a0 #fff;background:#f0f0f0;"></div><div class="a" style="left:219px;top:383px;width:11px;height:1px;background:#000"></div><div class="a" style="left:233px;top:369px;width:63px;height:14px;overflow:hidden"><div class="t" style="left:0;top:0;transform-origin:0 0;transform:scaleX(0.89);color:#000;font-size:12px;">0001</div></div><div class="a" style="left:296px;top:366px;width:1px;height:18px;background:#c0c0c0"></div><div class="a" style="left:231px;top:383px;width:66px;height:1px;background:#c0c0c0"></div><div class="a" style="left:297px;top:369px;width:87px;height:14px;overflow:hidden"><div class="t" style="right:0;top:0;transform-origin:100% 0;transform:scaleX(0.89);color:#000;font-size:12px;">30</div></div><div class="a" style="left:386px;top:366px;width:1px;height:18px;background:#c0c0c0"></div><div class="a" style="left:297px;top:383px;width:90px;height:1px;background:#c0c0c0"></div><div class="a" style="left:389px;top:369px;width:259px;height:14px;overflow:hidden"><div class="t" style="left:0;top:0;transform-origin:0 0;transform:scaleX(0.89);color:#000;font-size:12px;">Eduardo Luiz de Almeida</div></div><div class="a" style="left:648px;top:366px;width:1px;height:18px;background:#c0c0c0"></div><div class="a" style="left:387px;top:383px;width:262px;height:1px;background:#c0c0c0"></div><div class="a" style="left:651px;top:369px;width:162px;height:14px;overflow:hidden"><div class="t" style="left:0;top:0;transform-origin:0 0;transform:scaleX(0.89);color:#000;font-size:12px;">1150 - Auxiliar Serviços Gerais</div></div><div class="a" style="left:813px;top:366px;width:1px;height:18px;background:#c0c0c0"></div><div class="a" style="left:649px;top:383px;width:165px;height:1px;background:#c0c0c0"></div><div class="a" style="left:816px;top:369px;width:68px;height:14px;overflow:hidden"><div class="t" style="left:0;top:0;transform-origin:0 0;transform:scaleX(0.89);color:#000;font-size:12px;letter-spacing:0.8px;">12/02/2013</div></div><div class="a" style="left:884px;top:366px;width:1px;height:18px;background:#c0c0c0"></div><div class="a" style="left:814px;top:383px;width:71px;height:1px;background:#c0c0c0"></div><div class="a" style="left:219px;top:384px;width:11px;height:17px;border:1px solid;border-color:#fff #a0a0a0 #a0a0a0 #fff;background:#f0f0f0;"></div><div class="a" style="left:219px;top:401px;width:11px;height:1px;background:#000"></div><div class="a" style="left:233px;top:387px;width:63px;height:14px;overflow:hidden"><div class="t" style="left:0;top:0;transform-origin:0 0;transform:scaleX(0.89);color:#000;font-size:12px;">0001</div></div><div class="a" style="left:296px;top:384px;width:1px;height:18px;background:#c0c0c0"></div><div class="a" style="left:231px;top:401px;width:66px;height:1px;background:#c0c0c0"></div><div class="a" style="left:297px;top:387px;width:87px;height:14px;overflow:hidden"><div class="t" style="right:0;top:0;transform-origin:100% 0;transform:scaleX(0.89);color:#000;font-size:12px;">32</div></div><div class="a" style="left:386px;top:384px;width:1px;height:18px;background:#c0c0c0"></div><div class="a" style="left:297px;top:401px;width:90px;height:1px;background:#c0c0c0"></div><div class="a" style="left:389px;top:387px;width:259px;height:14px;overflow:hidden"><div class="t" style="left:0;top:0;transform-origin:0 0;transform:scaleX(0.89);color:#000;font-size:12px;">João&nbsp; Alves</div></div><div class="a" style="left:648px;top:384px;width:1px;height:18px;background:#c0c0c0"></div><div class="a" style="left:387px;top:401px;width:262px;height:1px;background:#c0c0c0"></div><div class="a" style="left:651px;top:387px;width:162px;height:14px;overflow:hidden"><div class="t" style="left:0;top:0;transform-origin:0 0;transform:scaleX(0.89);color:#000;font-size:12px;">1010 - Gerente Administrativo</div></div><div class="a" style="left:813px;top:384px;width:1px;height:18px;background:#c0c0c0"></div><div class="a" style="left:649px;top:401px;width:165px;height:1px;background:#c0c0c0"></div><div class="a" style="left:816px;top:387px;width:68px;height:14px;overflow:hidden"><div class="t" style="left:0;top:0;transform-origin:0 0;transform:scaleX(0.89);color:#000;font-size:12px;letter-spacing:0.8px;">13/01/2014</div></div><div class="a" style="left:884px;top:384px;width:1px;height:18px;background:#c0c0c0"></div><div class="a" style="left:814px;top:401px;width:71px;height:1px;background:#c0c0c0"></div><div class="a" style="left:219px;top:402px;width:11px;height:17px;border:1px solid;border-color:#fff #a0a0a0 #a0a0a0 #fff;background:#f0f0f0;"></div><div class="a" style="left:219px;top:419px;width:11px;height:1px;background:#000"></div><div class="a" style="left:233px;top:405px;width:63px;height:14px;overflow:hidden"><div class="t" style="left:0;top:0;transform-origin:0 0;transform:scaleX(0.89);color:#000;font-size:12px;">0001</div></div><div class="a" style="left:296px;top:402px;width:1px;height:18px;background:#c0c0c0"></div><div class="a" style="left:231px;top:419px;width:66px;height:1px;background:#c0c0c0"></div><div class="a" style="left:297px;top:405px;width:87px;height:14px;overflow:hidden"><div class="t" style="right:0;top:0;transform-origin:100% 0;transform:scaleX(0.89);color:#000;font-size:12px;">33</div></div><div class="a" style="left:386px;top:402px;width:1px;height:18px;background:#c0c0c0"></div><div class="a" style="left:297px;top:419px;width:90px;height:1px;background:#c0c0c0"></div><div class="a" style="left:389px;top:405px;width:259px;height:14px;overflow:hidden"><div class="t" style="left:0;top:0;transform-origin:0 0;transform:scaleX(0.89);color:#000;font-size:12px;">Afrânio Coutinho</div></div><div class="a" style="left:648px;top:402px;width:1px;height:18px;background:#c0c0c0"></div><div class="a" style="left:387px;top:419px;width:262px;height:1px;background:#c0c0c0"></div><div class="a" style="left:651px;top:405px;width:162px;height:14px;overflow:hidden"><div class="t" style="left:0;top:0;transform-origin:0 0;transform:scaleX(0.89);color:#000;font-size:12px;">1301 - Vendedor</div></div><div class="a" style="left:813px;top:402px;width:1px;height:18px;background:#c0c0c0"></div><div class="a" style="left:649px;top:419px;width:165px;height:1px;background:#c0c0c0"></div><div class="a" style="left:816px;top:405px;width:68px;height:14px;overflow:hidden"><div class="t" style="left:0;top:0;transform-origin:0 0;transform:scaleX(0.89);color:#000;font-size:12px;letter-spacing:0.8px;">17/04/2014</div></div><div class="a" style="left:884px;top:402px;width:1px;height:18px;background:#c0c0c0"></div><div class="a" style="left:814px;top:419px;width:71px;height:1px;background:#c0c0c0"></div><div class="a" style="left:219px;top:420px;width:11px;height:17px;border:1px solid;border-color:#fff #a0a0a0 #a0a0a0 #fff;background:#f0f0f0;"></div><div class="a" style="left:219px;top:437px;width:11px;height:1px;background:#000"></div><div class="a" style="left:233px;top:423px;width:63px;height:14px;overflow:hidden"><div class="t" style="left:0;top:0;transform-origin:0 0;transform:scaleX(0.89);color:#000;font-size:12px;">0001</div></div><div class="a" style="left:296px;top:420px;width:1px;height:18px;background:#c0c0c0"></div><div class="a" style="left:231px;top:437px;width:66px;height:1px;background:#c0c0c0"></div><div class="a" style="left:297px;top:423px;width:87px;height:14px;overflow:hidden"><div class="t" style="right:0;top:0;transform-origin:100% 0;transform:scaleX(0.89);color:#000;font-size:12px;">34</div></div><div class="a" style="left:386px;top:420px;width:1px;height:18px;background:#c0c0c0"></div><div class="a" style="left:297px;top:437px;width:90px;height:1px;background:#c0c0c0"></div><div class="a" style="left:389px;top:423px;width:259px;height:14px;overflow:hidden"><div class="t" style="left:0;top:0;transform-origin:0 0;transform:scaleX(0.89);color:#000;font-size:12px;">Mariana Cardoso de Lima</div></div><div class="a" style="left:648px;top:420px;width:1px;height:18px;background:#c0c0c0"></div><div class="a" style="left:387px;top:437px;width:262px;height:1px;background:#c0c0c0"></div><div class="a" style="left:651px;top:423px;width:162px;height:14px;overflow:hidden"><div class="t" style="left:0;top:0;transform-origin:0 0;transform:scaleX(0.89);color:#000;font-size:12px;">1301 - Vendedor</div></div><div class="a" style="left:813px;top:420px;width:1px;height:18px;background:#c0c0c0"></div><div class="a" style="left:649px;top:437px;width:165px;height:1px;background:#c0c0c0"></div><div class="a" style="left:816px;top:423px;width:68px;height:14px;overflow:hidden"><div class="t" style="left:0;top:0;transform-origin:0 0;transform:scaleX(0.89);color:#000;font-size:12px;letter-spacing:0.8px;">14/04/2014</div></div><div class="a" style="left:884px;top:420px;width:1px;height:18px;background:#c0c0c0"></div><div class="a" style="left:814px;top:437px;width:71px;height:1px;background:#c0c0c0"></div><div class="a" style="left:219px;top:438px;width:11px;height:17px;border:1px solid;border-color:#fff #a0a0a0 #a0a0a0 #fff;background:#f0f0f0;"></div><div class="a" style="left:219px;top:455px;width:11px;height:1px;background:#000"></div><div class="a" style="left:233px;top:441px;width:63px;height:14px;overflow:hidden"><div class="t" style="left:0;top:0;transform-origin:0 0;transform:scaleX(0.89);color:#000;font-size:12px;">0001</div></div><div class="a" style="left:296px;top:438px;width:1px;height:18px;background:#c0c0c0"></div><div class="a" style="left:231px;top:455px;width:66px;height:1px;background:#c0c0c0"></div><div class="a" style="left:297px;top:441px;width:87px;height:14px;overflow:hidden"><div class="t" style="right:0;top:0;transform-origin:100% 0;transform:scaleX(0.89);color:#000;font-size:12px;">38</div></div><div class="a" style="left:386px;top:438px;width:1px;height:18px;background:#c0c0c0"></div><div class="a" style="left:297px;top:455px;width:90px;height:1px;background:#c0c0c0"></div><div class="a" style="left:389px;top:441px;width:259px;height:14px;overflow:hidden"><div class="t" style="left:0;top:0;transform-origin:0 0;transform:scaleX(0.89);color:#000;font-size:12px;">Alceu Amoroso Lima</div></div><div class="a" style="left:648px;top:438px;width:1px;height:18px;background:#c0c0c0"></div><div class="a" style="left:387px;top:455px;width:262px;height:1px;background:#c0c0c0"></div><div class="a" style="left:651px;top:441px;width:162px;height:14px;overflow:hidden"><div class="t" style="left:0;top:0;transform-origin:0 0;transform:scaleX(0.89);color:#000;font-size:12px;">1320 - Montador Especializado</div></div><div class="a" style="left:813px;top:438px;width:1px;height:18px;background:#c0c0c0"></div><div class="a" style="left:649px;top:455px;width:165px;height:1px;background:#c0c0c0"></div><div class="a" style="left:816px;top:441px;width:68px;height:14px;overflow:hidden"><div class="t" style="left:0;top:0;transform-origin:0 0;transform:scaleX(0.89);color:#000;font-size:12px;letter-spacing:0.8px;">12/06/2015</div></div><div class="a" style="left:884px;top:438px;width:1px;height:18px;background:#c0c0c0"></div><div class="a" style="left:814px;top:455px;width:71px;height:1px;background:#c0c0c0"></div><div class="a" style="left:219px;top:456px;width:11px;height:17px;border:1px solid;border-color:#fff #a0a0a0 #a0a0a0 #fff;background:#f0f0f0;"></div><div class="a" style="left:219px;top:473px;width:11px;height:1px;background:#000"></div><div class="a" style="left:233px;top:459px;width:63px;height:14px;overflow:hidden"><div class="t" style="left:0;top:0;transform-origin:0 0;transform:scaleX(0.89);color:#000;font-size:12px;">0001</div></div><div class="a" style="left:296px;top:456px;width:1px;height:18px;background:#c0c0c0"></div><div class="a" style="left:231px;top:473px;width:66px;height:1px;background:#c0c0c0"></div><div class="a" style="left:297px;top:459px;width:87px;height:14px;overflow:hidden"><div class="t" style="right:0;top:0;transform-origin:100% 0;transform:scaleX(0.89);color:#000;font-size:12px;">39</div></div><div class="a" style="left:386px;top:456px;width:1px;height:18px;background:#c0c0c0"></div><div class="a" style="left:297px;top:473px;width:90px;height:1px;background:#c0c0c0"></div><div class="a" style="left:389px;top:459px;width:259px;height:14px;overflow:hidden"><div class="t" style="left:0;top:0;transform-origin:0 0;transform:scaleX(0.89);color:#000;font-size:12px;">Carlos Castello Branco</div></div><div class="a" style="left:648px;top:456px;width:1px;height:18px;background:#c0c0c0"></div><div class="a" style="left:387px;top:473px;width:262px;height:1px;background:#c0c0c0"></div><div class="a" style="left:651px;top:459px;width:162px;height:14px;overflow:hidden"><div class="t" style="left:0;top:0;transform-origin:0 0;transform:scaleX(0.89);color:#000;font-size:12px;">1320 - Montador Especializado</div></div><div class="a" style="left:813px;top:456px;width:1px;height:18px;background:#c0c0c0"></div><div class="a" style="left:649px;top:473px;width:165px;height:1px;background:#c0c0c0"></div><div class="a" style="left:816px;top:459px;width:68px;height:14px;overflow:hidden"><div class="t" style="left:0;top:0;transform-origin:0 0;transform:scaleX(0.89);color:#000;font-size:12px;letter-spacing:0.8px;">15/06/2015</div></div><div class="a" style="left:884px;top:456px;width:1px;height:18px;background:#c0c0c0"></div><div class="a" style="left:814px;top:473px;width:71px;height:1px;background:#c0c0c0"></div><div class="a" style="left:219px;top:474px;width:11px;height:17px;border:1px solid;border-color:#fff #a0a0a0 #a0a0a0 #fff;background:#f0f0f0;"></div><div class="a" style="left:219px;top:491px;width:11px;height:1px;background:#000"></div><div class="a" style="left:233px;top:477px;width:63px;height:14px;overflow:hidden"><div class="t" style="left:0;top:0;transform-origin:0 0;transform:scaleX(0.89);color:#000;font-size:12px;">0001</div></div><div class="a" style="left:296px;top:474px;width:1px;height:18px;background:#c0c0c0"></div><div class="a" style="left:231px;top:491px;width:66px;height:1px;background:#c0c0c0"></div><div class="a" style="left:297px;top:477px;width:87px;height:14px;overflow:hidden"><div class="t" style="right:0;top:0;transform-origin:100% 0;transform:scaleX(0.89);color:#000;font-size:12px;">40</div></div><div class="a" style="left:386px;top:474px;width:1px;height:18px;background:#c0c0c0"></div><div class="a" style="left:297px;top:491px;width:90px;height:1px;background:#c0c0c0"></div><div class="a" style="left:389px;top:477px;width:259px;height:14px;overflow:hidden"><div class="t" style="left:0;top:0;transform-origin:0 0;transform:scaleX(0.89);color:#000;font-size:12px;">Sandro Cesar do Amaral</div></div><div class="a" style="left:648px;top:474px;width:1px;height:18px;background:#c0c0c0"></div><div class="a" style="left:387px;top:491px;width:262px;height:1px;background:#c0c0c0"></div><div class="a" style="left:651px;top:477px;width:162px;height:14px;overflow:hidden"><div class="t" style="left:0;top:0;transform-origin:0 0;transform:scaleX(0.89);color:#000;font-size:12px;">1120 - Analista Administrativo</div></div><div class="a" style="left:813px;top:474px;width:1px;height:18px;background:#c0c0c0"></div><div class="a" style="left:649px;top:491px;width:165px;height:1px;background:#c0c0c0"></div><div class="a" style="left:816px;top:477px;width:68px;height:14px;overflow:hidden"><div class="t" style="left:0;top:0;transform-origin:0 0;transform:scaleX(0.89);color:#000;font-size:12px;letter-spacing:0.8px;">10/08/2015</div></div><div class="a" style="left:884px;top:474px;width:1px;height:18px;background:#c0c0c0"></div><div class="a" style="left:814px;top:491px;width:71px;height:1px;background:#c0c0c0"></div><div class="a" style="left:219px;top:492px;width:11px;height:17px;border:1px solid;border-color:#fff #a0a0a0 #a0a0a0 #fff;background:#f0f0f0;"></div><div class="a" style="left:219px;top:509px;width:11px;height:1px;background:#000"></div><div class="a" style="left:233px;top:495px;width:63px;height:14px;overflow:hidden"><div class="t" style="left:0;top:0;transform-origin:0 0;transform:scaleX(0.89);color:#000;font-size:12px;">0001</div></div><div class="a" style="left:296px;top:492px;width:1px;height:18px;background:#c0c0c0"></div><div class="a" style="left:231px;top:509px;width:66px;height:1px;background:#c0c0c0"></div><div class="a" style="left:297px;top:495px;width:87px;height:14px;overflow:hidden"><div class="t" style="right:0;top:0;transform-origin:100% 0;transform:scaleX(0.89);color:#000;font-size:12px;">41</div></div><div class="a" style="left:386px;top:492px;width:1px;height:18px;background:#c0c0c0"></div><div class="a" style="left:297px;top:509px;width:90px;height:1px;background:#c0c0c0"></div><div class="a" style="left:389px;top:495px;width:259px;height:14px;overflow:hidden"><div class="t" style="left:0;top:0;transform-origin:0 0;transform:scaleX(0.89);color:#000;font-size:12px;">Paulo Coelho</div></div><div class="a" style="left:648px;top:492px;width:1px;height:18px;background:#c0c0c0"></div><div class="a" style="left:387px;top:509px;width:262px;height:1px;background:#c0c0c0"></div><div class="a" style="left:651px;top:495px;width:162px;height:14px;overflow:hidden"><div class="t" style="left:0;top:0;transform-origin:0 0;transform:scaleX(0.89);color:#000;font-size:12px;">1321 - Diretor Superintendente</div></div><div class="a" style="left:813px;top:492px;width:1px;height:18px;background:#c0c0c0"></div><div class="a" style="left:649px;top:509px;width:165px;height:1px;background:#c0c0c0"></div><div class="a" style="left:816px;top:495px;width:68px;height:14px;overflow:hidden"><div class="t" style="left:0;top:0;transform-origin:0 0;transform:scaleX(0.89);color:#000;font-size:12px;letter-spacing:0.8px;">01/03/2016</div></div><div class="a" style="left:884px;top:492px;width:1px;height:18px;background:#c0c0c0"></div><div class="a" style="left:814px;top:509px;width:71px;height:1px;background:#c0c0c0"></div><div class="a" style="left:219px;top:510px;width:11px;height:17px;border:1px solid;border-color:#fff #a0a0a0 #a0a0a0 #fff;background:#f0f0f0;"></div><div class="a" style="left:219px;top:527px;width:11px;height:1px;background:#000"></div><div class="a" style="left:233px;top:513px;width:63px;height:14px;overflow:hidden"><div class="t" style="left:0;top:0;transform-origin:0 0;transform:scaleX(0.89);color:#000;font-size:12px;">0001</div></div><div class="a" style="left:296px;top:510px;width:1px;height:18px;background:#c0c0c0"></div><div class="a" style="left:231px;top:527px;width:66px;height:1px;background:#c0c0c0"></div><div class="a" style="left:297px;top:513px;width:87px;height:14px;overflow:hidden"><div class="t" style="right:0;top:0;transform-origin:100% 0;transform:scaleX(0.89);color:#000;font-size:12px;">42</div></div><div class="a" style="left:386px;top:510px;width:1px;height:18px;background:#c0c0c0"></div><div class="a" style="left:297px;top:527px;width:90px;height:1px;background:#c0c0c0"></div><div class="a" style="left:389px;top:513px;width:259px;height:14px;overflow:hidden"><div class="t" style="left:0;top:0;transform-origin:0 0;transform:scaleX(0.89);color:#000;font-size:12px;">Ivan Lins</div></div><div class="a" style="left:648px;top:510px;width:1px;height:18px;background:#c0c0c0"></div><div class="a" style="left:387px;top:527px;width:262px;height:1px;background:#c0c0c0"></div><div class="a" style="left:651px;top:513px;width:162px;height:14px;overflow:hidden"><div class="t" style="left:0;top:0;transform-origin:0 0;transform:scaleX(0.89);color:#000;font-size:12px;">1010 - Gerente Administrativo</div></div><div class="a" style="left:813px;top:510px;width:1px;height:18px;background:#c0c0c0"></div><div class="a" style="left:649px;top:527px;width:165px;height:1px;background:#c0c0c0"></div><div class="a" style="left:816px;top:513px;width:68px;height:14px;overflow:hidden"><div class="t" style="left:0;top:0;transform-origin:0 0;transform:scaleX(0.89);color:#000;font-size:12px;letter-spacing:0.8px;">01/07/2016</div></div><div class="a" style="left:884px;top:510px;width:1px;height:18px;background:#c0c0c0"></div><div class="a" style="left:814px;top:527px;width:71px;height:1px;background:#c0c0c0"></div>
</body></html>
